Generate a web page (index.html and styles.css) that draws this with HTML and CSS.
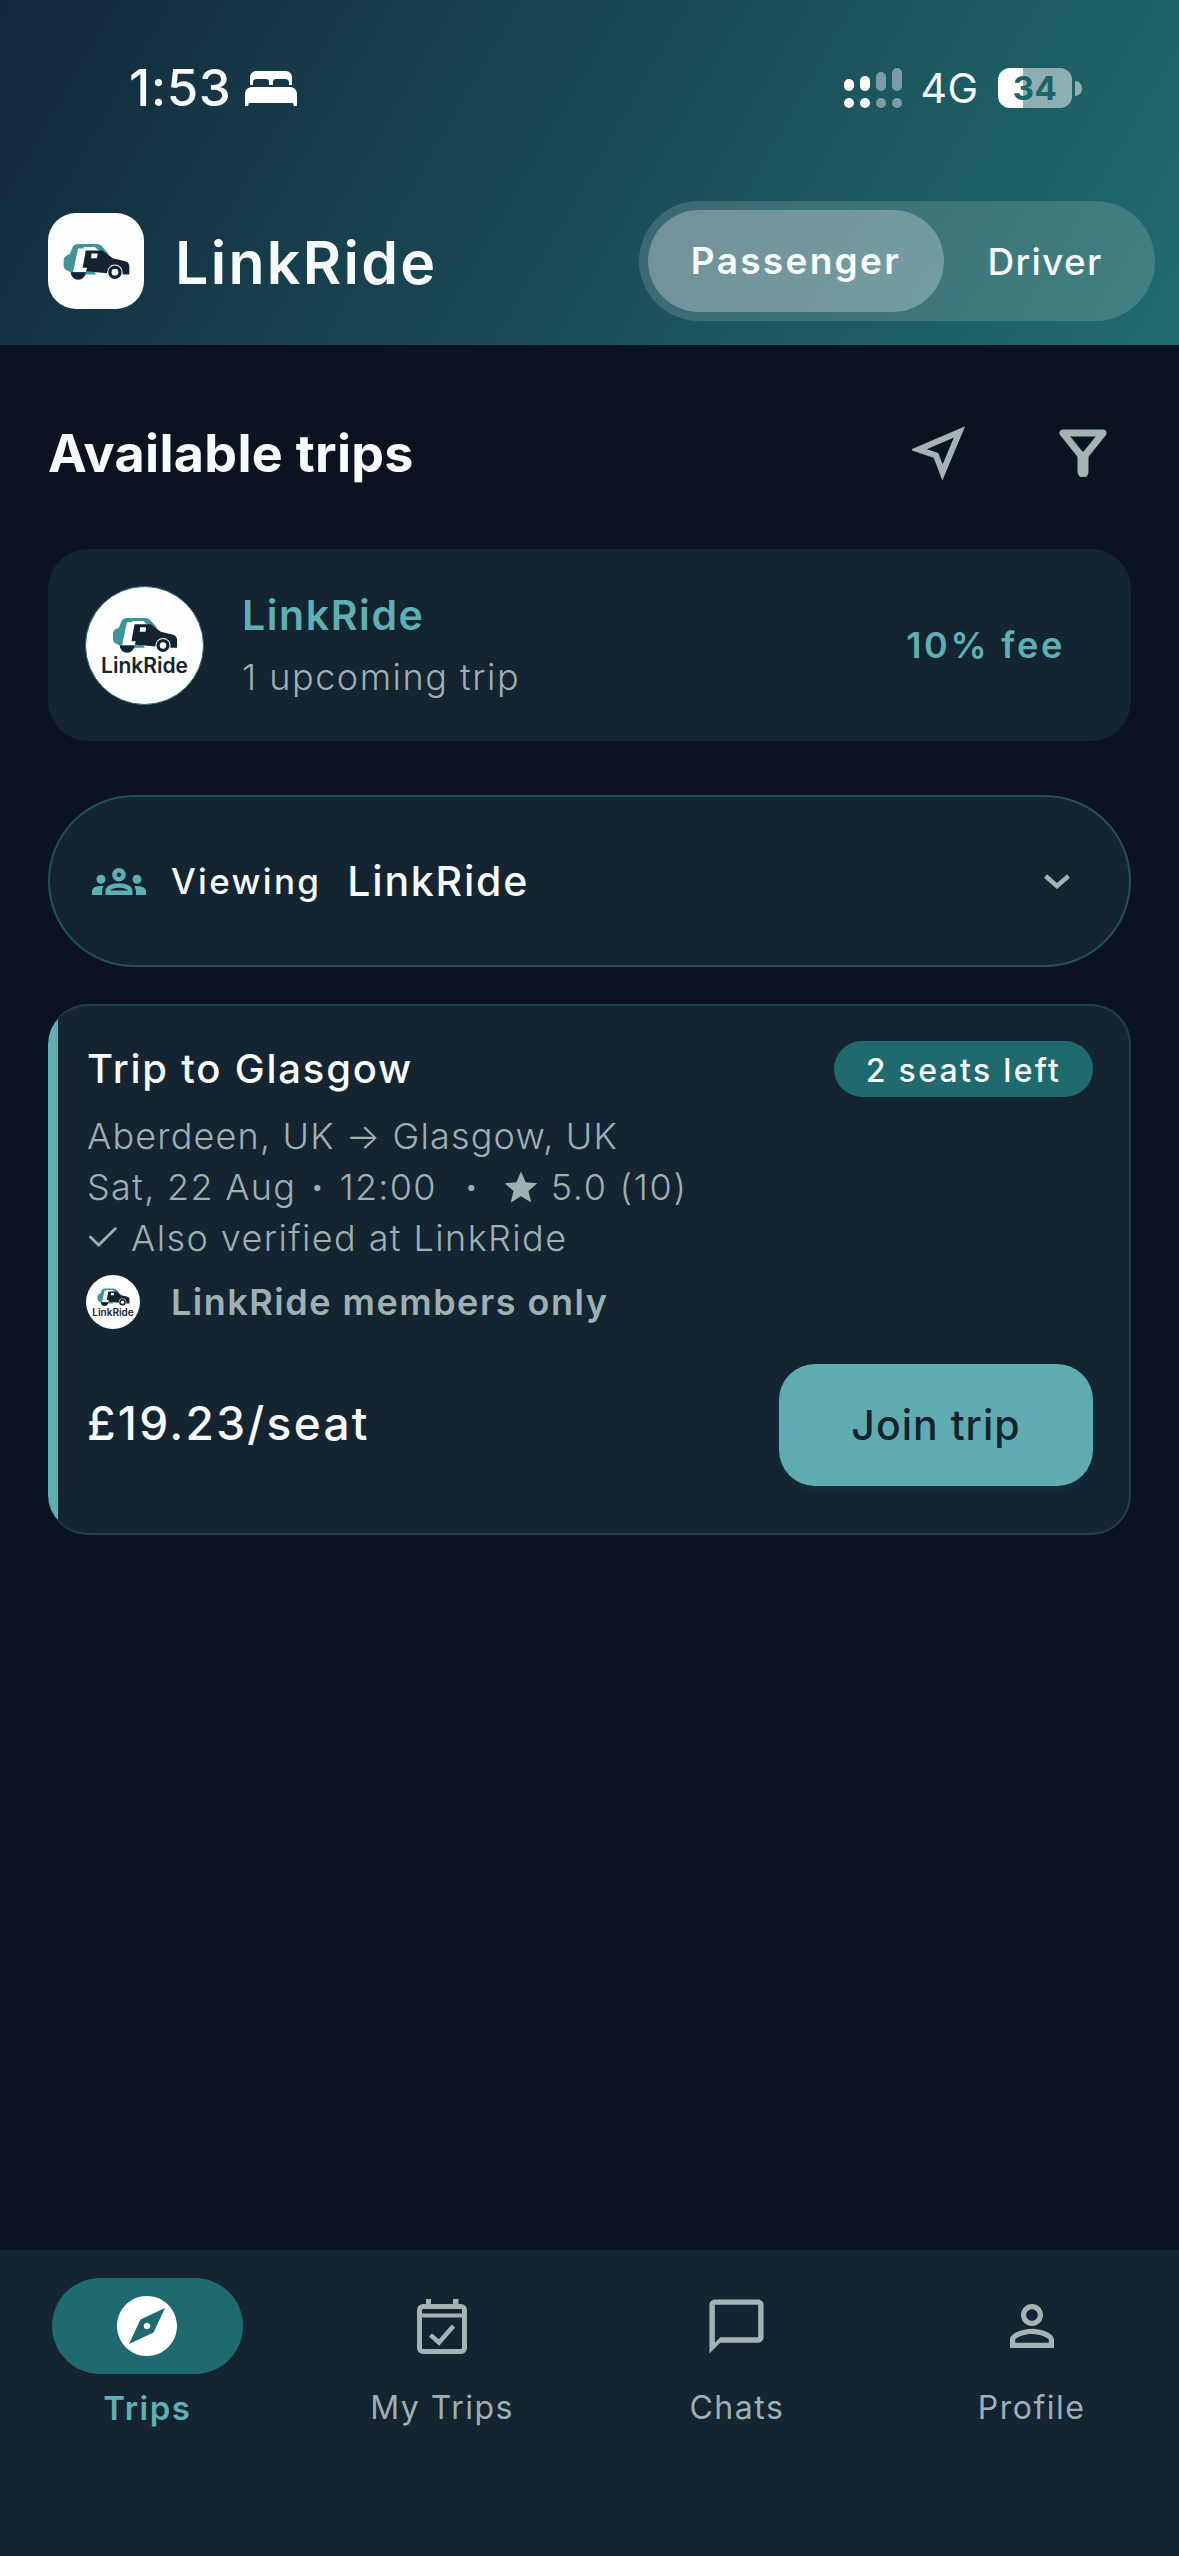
FILE: index.html
```html
<!DOCTYPE html>
<html lang="en">
<head>
<meta charset="utf-8">
<title>LinkRide</title>
<link rel="stylesheet" href="styles.css">
</head>
<body>
<svg class="defs" width="0" height="0" aria-hidden="true">
  <symbol id="car" viewBox="0 0 200 110">
    <path fill="#3f959b" d="M2 50Q3 38 20 33L28 14Q32 3 46 3H100Q112 3 120 14L138 34H120L95 12H62L48 84H92L100 94H36L12 82Q2 78 2 66Z"/>
    <path fill="#13232f" d="M68 22H118L148 45L186 54Q198 58 198 70V94H178A24 24 0 0 0 132 90L66 84L58 78Z"/>
    <path fill="#fff" d="M85 31H100Q105 31 103 38L101 45H84Z"/>
    <path fill="#fff" d="M45 16H66L52 74H72L68 86H30Z"/>
    <path fill="#13232f" d="M23 87H68A22 22 0 0 1 23 87Z"/>
    <circle cx="155" cy="87" r="23" fill="#fff"/>
    <circle cx="155" cy="87" r="20" fill="#13232f"/>
    <circle cx="155" cy="87" r="10" fill="#fff"/>
  </symbol>
</svg>
<div class="app">
  <header class="top">
    <div class="status">
      <div class="status-left">
        <span class="clock">1:53</span>
        <svg class="bed" viewBox="0 0 52 35"><path fill="#fff" d="M0 23c0-4 3-7 7-7h38c4 0 7 3 7 7v12h-3l-1-3H4l-1 3H0z"/><path fill="#fff" d="M5 6c0-3 3-6 6-6h30c3 0 6 3 6 6v8h-3v-3c0-2-2-3-4-3H31c-2 0-3 1-3 3v3h-4v-3c0-2-1-3-3-3H12c-2 0-4 1-4 3v3H5z"/></svg>
      </div>
      <div class="status-right">
        <svg class="signal" viewBox="0 0 58 40">
          <g fill="#fff">
            <rect x="0" y="11" width="10" height="12" rx="5"/><rect x="16" y="8" width="10" height="15" rx="5"/>
            <circle cx="5" cy="35" r="5"/><circle cx="21" cy="35" r="5"/>
          </g>
          <g fill="#fff" opacity=".42">
            <rect x="32" y="4" width="10" height="19" rx="5"/><rect x="48" y="0" width="10" height="23" rx="5"/>
            <circle cx="37" cy="35" r="5"/><circle cx="53" cy="35" r="5"/>
          </g>
        </svg>
        <span class="net">4G</span>
        <span class="battery">34</span>
        <span class="nub"></span>
      </div>
    </div>
    <div class="brandbar">
      <div class="brand">
        <div class="applogo"><svg class="applogo-car" viewBox="0 0 200 110"><use href="#car"/></svg></div>
        <span class="brandname">LinkRide</span>
      </div>
      <div class="toggle">
        <span class="toggle-on">Passenger</span>
        <span class="toggle-off">Driver</span>
      </div>
    </div>
  </header>

  <main class="content">
    <div class="heading">
      <h1 class="heading-title">Available trips</h1>
      <div class="heading-actions">
        <svg class="ic-nav" viewBox="0 0 54 54"><path d="M47.500 6L6.500 23.500L24 29.500L30.500 46.500Z" fill="none" stroke="#a5b3b5" stroke-width="6" stroke-linejoin="miter" stroke-miterlimit="6"/></svg>
        <svg class="ic-filter" viewBox="0 0 48 48"><path d="M4 4H44L24 29Z" fill="none" stroke="#a5b3b5" stroke-width="7" stroke-linejoin="round"/><path d="M24 28V43" stroke="#a5b3b5" stroke-width="11" stroke-linecap="round"/></svg>
      </div>
    </div>

    <section class="club">
      <div class="avatar">
        <svg class="avatar-car" viewBox="0 0 200 110"><use href="#car"/></svg>
        <span class="avatar-name">LinkRide</span>
      </div>
      <div class="club-text">
        <div class="club-name">LinkRide</div>
        <div class="club-sub">1 upcoming trip</div>
      </div>
      <div class="club-fee">10% fee</div>
    </section>

    <section class="selector">
      <svg class="ic-groups" viewBox="0 6 24 12"><path fill="#5fb0b4" d="M4,13c1.1,0,2-0.9,2-2c0-1.1-0.9-2-2-2s-2,0.9-2,2C2,12.1,2.9,13,4,13z M5.130,14.100C4.760,14.040,4.390,14,4,14c-0.990,0-1.930,0.210-2.780,0.580C0.480,14.900,0,15.620,0,16.430V18l4.500,0v-1.610C4.500,15.560,4.730,14.780,5.130,14.100z M20,13c1.100,0,2-0.900,2-2c0-1.100-0.900-2-2-2s-2,0.900-2,2C18,12.100,18.900,13,20,13z M24,16.430c0-0.810-0.480-1.530-1.220-1.850C21.930,14.210,20.990,14,20,14c-0.390,0-0.760,0.040-1.130,0.100c0.400,0.680,0.630,1.460,0.630,2.290V18l4.500,0V16.430z M16.240,13.650c-1.170-0.520-2.610-0.900-4.240-0.900c-1.630,0-3.070,0.390-4.240,0.900C6.680,14.130,6,15.210,6,16.390V18h12v-1.610C18,15.210,17.320,14.130,16.240,13.650z M8.070,16c0.090-0.230,0.130-0.390,0.910-0.690c0.970-0.380,1.990-0.560,3.020-0.560s2.050,0.180,3.020,0.560c0.770,0.300,0.810,0.460,0.910,0.690H8.070z M12,8c0.550,0,1,0.450,1,1s-0.450,1-1,1s-1-0.450-1-1S11.450,8,12,8 M12,6c-1.660,0-3,1.340-3,3c0,1.660,1.340,3,3,3s3-1.340,3-3C15,7.340,13.660,6,12,6L12,6z"/></svg>
      <span class="sel-label">Viewing</span>
      <span class="sel-value">LinkRide</span>
      <svg class="ic-chevron" viewBox="0 0 28 17"><path d="M2.500 3L14 13L25.500 3" fill="none" stroke="#a5b3b5" stroke-width="4.500"/></svg>
    </section>

    <article class="trip">
      <div class="trip-head">
        <div class="trip-title">Trip to Glasgow</div>
        <div class="trip-badge">2 seats left</div>
      </div>
      <div class="trip-meta">
        <div>Aberdeen, UK → Glasgow, UK</div>
        <div class="trip-when">Sat, 22 Aug <b class="dot">·</b> 12:00 <b class="dot dot-wide">·</b><svg class="star" viewBox="0 0 24 24"><path fill="#9fb0b3" d="M12 1l3.300 7.600 8.200.8-6.200 5.400 1.900 8.100L12 18.600l-7.200 4.300 1.900-8.100L.500 9.400l8.200-.8z"/></svg><span class="rating">5.0 (10)</span></div>
        <div class="trip-verified"><span class="check">✓</span> Also verified at LinkRide</div>
      </div>
      <div class="trip-club">
        <div class="mini">
          <svg class="mini-car" viewBox="0 0 200 110"><use href="#car"/></svg>
          <span class="mini-name">LinkRide</span>
        </div>
        <span class="trip-club-name">LinkRide members only</span>
      </div>
      <div class="trip-foot">
        <div class="trip-price">£19.23/seat</div>
        <button class="join" type="button">Join trip</button>
      </div>
    </article>
  </main>

  <nav class="tabs">
    <div class="tab tab-active">
      <div class="tab-icon"><svg class="i72" viewBox="0 0 24 24"><path fill="#fff" d="M12 10.900c-.61 0-1.100.49-1.100 1.100s.49 1.100 1.100 1.100c.61 0 1.100-.49 1.100-1.100s-.49-1.100-1.100-1.100zM12 2C6.480 2 2 6.480 2 12s4.480 10 10 10 10-4.480 10-10S17.520 2 12 2zm2.190 12.190L6 18l3.810-8.190L18 6l-3.810 8.190z"/></svg></div>
      <span class="tab-label">Trips</span>
    </div>
    <div class="tab">
      <div class="tab-icon"><svg class="ic-cal" viewBox="0 0 50 55"><g fill="none" stroke="#a5b3b5"><rect x="2.500" y="7.500" width="45" height="45" rx="3.500" stroke-width="5"/><path d="M2 16.500H48" stroke-width="4"/><path d="M13.500 36L22 43.500L36.500 27" stroke-width="4.500"/></g><rect x="9" y="0" width="5" height="7" fill="#a5b3b5"/><rect x="36" y="0" width="5.500" height="7" fill="#a5b3b5"/></svg></div>
      <span class="tab-label">My Trips</span>
    </div>
    <div class="tab">
      <div class="tab-icon"><svg class="i65" viewBox="0 0 24 24"><path fill="#a5b3b5" d="M20 2H4c-1.100 0-2 .9-2 2v18l4-4h14c1.100 0 2-.9 2-2V4c0-1.100-.9-2-2-2zm0 14H6l-2 2V4h16v12z"/></svg></div>
      <span class="tab-label">Chats</span>
    </div>
    <div class="tab">
      <div class="tab-icon"><svg class="i66" viewBox="0 0 24 24"><path fill="#a5b3b5" d="M12 5.900c1.160 0 2.100.94 2.100 2.100s-.94 2.100-2.100 2.100S9.900 9.160 9.900 8s.94-2.100 2.100-2.100m0 9c2.970 0 6.100 1.460 6.100 2.100v1.100H5.900V17c0-.64 3.130-2.100 6.100-2.100M12 4C9.790 4 8 5.790 8 8s1.790 4 4 4 4-1.790 4-4-1.790-4-4-4zm0 9c-2.670 0-8 1.340-8 4v3h16v-3c0-2.660-5.330-4-8-4z"/></svg></div>
      <span class="tab-label">Profile</span>
    </div>
  </nav>
</div>
</body>
</html>
```

FILE: styles.css
```css
* { box-sizing: border-box; }
html, body { margin: 0; padding: 0; }
body {
  background: #0b1321;
  color: #f7fafa;
  font-family: Inter, "Noto Sans", sans-serif;
}
.defs { position: absolute; }
.app {
  height: 100vh;
  display: flex;
  flex-direction: column;
  overflow: hidden;
}

/* header */
.top {
  height: 345px;
  flex: none;
  padding-top: 61px;
  background: linear-gradient(120deg, #12283a 0%, #1a4a56 50%, #206d6f 100%);
}
.status {
  display: flex;
  justify-content: space-between;
  align-items: center;
  height: 54px;
  padding: 0 97px 0 129px;
}
.status-left { display: flex; align-items: center; gap: 14px; }
.clock { font-size: 51px; font-weight: 500; line-height: 54px; letter-spacing: .5px; }
.bed { width: 52px; height: 35px; }
.status-right { display: flex; align-items: center; }
.signal { width: 58px; height: 40px; }
.net { font-size: 41px; font-weight: 400; line-height: 54px; margin-left: 18px; letter-spacing: .5px; }
.battery {
  width: 74px;
  height: 40px;
  margin-left: 19.500px;
  border-radius: 12px;
  background: linear-gradient(90deg, #fff 34%, rgba(255,255,255,.5) 34%);
  color: #1d6468;
  font-size: 33px;
  font-weight: 700;
  line-height: 40px;
  text-align: center;
  letter-spacing: .5px;
}
.nub {
  width: 7px;
  height: 15px;
  margin-left: 3px;
  border-radius: 0 8px 8px 0;
  background: rgba(255,255,255,.5);
}
.brandbar {
  display: flex;
  justify-content: space-between;
  align-items: center;
  margin-top: 86px;
  padding: 0 24px 0 48px;
}
.brand { display: flex; align-items: center; gap: 31px; }
.applogo {
  width: 96px;
  height: 96px;
  border-radius: 28px;
  background: #fcfefe;
  display: flex;
  align-items: center;
  justify-content: center;
}
.applogo-car { width: 67px; height: 37px; }
.brandname { font-size: 59px; font-weight: 600; line-height: 74px; padding-top: 3px; letter-spacing: 2.300px; }
.toggle {
  display: flex;
  align-items: center;
  width: 516px;
  height: 120px;
  padding: 9px;
  border-radius: 60px;
  background: rgba(255,255,255,.15);
  font-size: 37px;
}
.toggle-on {
  width: 296px;
  height: 102px;
  border-radius: 51px;
  background: rgba(255,255,255,.28);
  font-weight: 600;
  line-height: 102px;
  text-align: center;
  letter-spacing: 2.300px;
}
.toggle-off { flex: 1; text-align: center; font-weight: 500; letter-spacing: 1.300px; }

/* content */
.content { flex: 1; padding: 58px 48px 0; }
.heading {
  display: flex;
  justify-content: space-between;
  align-items: center;
  height: 100px;
  margin-bottom: 46px;
}
.heading-title { margin: 0; font-size: 52px; font-weight: 700; letter-spacing: .3px; }
.heading-actions { display: flex; align-items: center; gap: 93px; padding-right: 24px; }
.ic-nav { width: 54px; height: 54px; }
.ic-filter { width: 48px; height: 48px; }

.club {
  display: flex;
  align-items: center;
  height: 192px;
  padding: 0 66px 0 37px;
  border-radius: 40px;
  background: #142431;
}
.avatar {
  flex: none;
  width: 119px;
  height: 119px;
  border-radius: 50%;
  border: 1.500px solid #1f6a6e;
  background: #fcfefe;
  display: flex;
  flex-direction: column;
  align-items: center;
  padding-top: 30px;
  color: #13232f;
}
.avatar-car { width: 72px; height: 36px; flex: none; }
.avatar-name { font-size: 21px; font-weight: 600; line-height: 26px; white-space: nowrap; }
.club-text { flex: 1; margin-left: 38px; }
.club-name { font-size: 41px; font-weight: 600; line-height: 50px; margin-top: -2px; color: #5fb0b4; letter-spacing: 1.600px; }
.club-sub { font-size: 36px; font-weight: 300; line-height: 44px; margin-top: 15px; color: #9fb0b3; letter-spacing: 1.500px; }
.club-fee { font-size: 36px; font-weight: 600; color: #5fb0b4; letter-spacing: 2.700px; }

.selector {
  display: flex;
  align-items: center;
  height: 172px;
  margin-top: 54px;
  padding: 0 58px 0 42px;
  border: 2px solid #23505b;
  border-radius: 86px;
  background: #142431;
}
.ic-groups { width: 54px; height: 27px; flex: none; }
.sel-label { margin-left: 25px; font-size: 35px; font-weight: 500; letter-spacing: 2.300px; }
.sel-value { flex: 1; margin-left: 26px; font-size: 41px; font-weight: 500; letter-spacing: 1.800px; }
.ic-chevron { width: 28px; height: 17px; flex: none; }

.trip {
  height: 531px;
  margin-top: 37px;
  padding: 35px 36px 0 39px;
  border: 2px solid #1d3f4b;
  border-left: 0;
  border-radius: 40px;
  background: linear-gradient(90deg, #5fb0b4 10px, #142431 10px);
}
.trip-head { display: flex; justify-content: space-between; align-items: center; height: 56px; }
.trip-title { font-size: 40px; font-weight: 500; line-height: 54px; letter-spacing: 1.800px; }
.trip-badge {
  width: 259px;
  height: 56px;
  border-radius: 28px;
  background: #1f6a6e;
  font-size: 32px;
  font-weight: 500;
  line-height: 60px;
  text-align: center;
  letter-spacing: 2.300px;
}
.trip-meta {
  margin-top: 14px;
  font-size: 36px;
  font-weight: 300;
  line-height: 51px;
  letter-spacing: 1.150px;
  color: #9fb0b3;
  white-space: nowrap;
}
.trip-when { letter-spacing: 1.300px; }
.trip-verified { letter-spacing: 1.400px; }
.check { font-size: 42px; line-height: 40px; margin-left: -3px; margin-right: -3px; }
.dot { font-weight: 700; margin: 0 3.500px; }
.dot-wide { margin: 0 25px 0 17px; }
.star { width: 34px; height: 34px; margin-right: 13px; vertical-align: -4px; }
.rating { letter-spacing: 1.700px; }
.trip-club { display: flex; align-items: center; margin: 11px 0 0 -1px; }
.mini {
  flex: none;
  width: 54px;
  height: 54px;
  border-radius: 50%;
  background: #fcfefe;
  display: flex;
  flex-direction: column;
  align-items: center;
  padding-top: 13px;
  color: #13232f;
}
.mini-car { width: 33px; height: 18px; flex: none; }
.mini-name { font-size: 10px; font-weight: 600; line-height: 12px; white-space: nowrap; }
.trip-club-name { margin-left: 31px; font-size: 36px; font-weight: 600; color: #9fb0b3; letter-spacing: 1.500px; }
.trip-foot { display: flex; justify-content: space-between; align-items: center; margin-top: 35px; }
.trip-price { font-size: 46px; font-weight: 500; letter-spacing: 2.300px; margin-bottom: 5px; }
.join {
  width: 314px;
  height: 122px;
  border: 0;
  border-radius: 36px;
  background: #5fadb2;
  box-shadow: 0 4px 10px rgba(15,60,70,.5);
  color: #13232f;
  font-family: inherit;
  font-size: 41px;
  font-weight: 500;
  letter-spacing: 1px;
}

/* tab bar */
.tabs {
  flex: none;
  display: grid;
  grid-template-columns: repeat(4, 1fr);
  height: 306px;
  padding: 28px 0 0;
  background: #142431;
}
.tab { display: flex; flex-direction: column; align-items: center; }
.tab-icon {
  width: 191px;
  height: 96px;
  border-radius: 48px;
  display: flex;
  align-items: center;
  justify-content: center;
}
.tab-active .tab-icon { background: #1f6a6e; }
.tab-label { margin-top: 12px; font-size: 32px; line-height: 44px; font-weight: 400; color: #9fb0b3; letter-spacing: 1.500px; }
.tab-active .tab-label { font-size: 33px; font-weight: 600; color: #5fb0b4; }
.i72 { width: 72px; height: 72px; }
.i66 { width: 66px; height: 66px; }
.i65 { width: 65px; height: 65px; }
.ic-cal { width: 50px; height: 55px; }
```
